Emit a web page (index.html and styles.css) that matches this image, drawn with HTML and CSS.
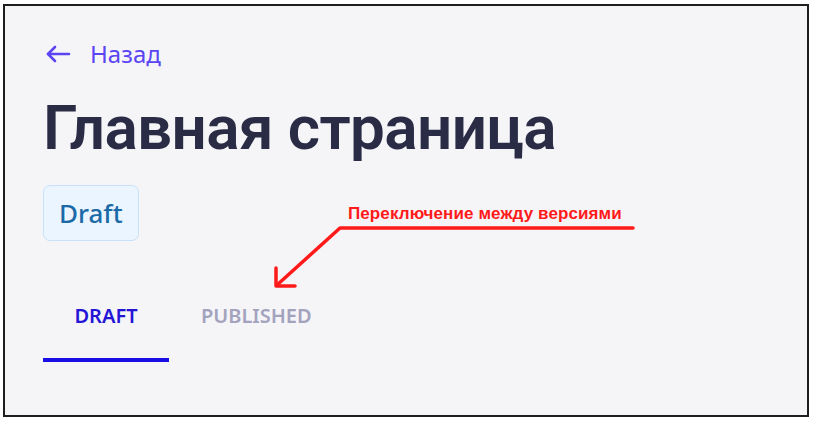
FILE: index.html
```html
<!DOCTYPE html>
<html lang="ru">
<head>
<meta charset="utf-8">
<link rel="stylesheet" href="styles.css">
</head>
<body>
<div class="frame">
  <a class="back" href="#">
    <svg class="back-icon" width="26" height="18" viewBox="0 0 26 18" fill="none" stroke="currentColor" stroke-width="2.6" stroke-linecap="round" stroke-linejoin="round">
      <path d="M24 9H3"/>
      <path d="M10 2L3 9l7 7"/>
    </svg>
    <span>Назад</span>
  </a>
  <h1 class="title">Главная страница</h1>
  <div class="badge-row"><span class="badge">Draft</span></div>
  <div class="tabs">
    <div class="tab tab-active">DRAFT</div>
    <div class="tab">PUBLISHED</div>
  </div>
  <div class="note">
    <span class="note-text">Переключение между версиями</span>
    <svg class="note-arrow" width="370" height="70" viewBox="0 0 370 70" fill="none" stroke="#ff1a1a" stroke-width="3.5" stroke-linecap="round" stroke-linejoin="round">
      <path d="M360 9H67L4 66"/>
      <path d="M3 49V67H22"/>
    </svg>
  </div>
</div>
</body>
</html>
```
FILE: styles.css
```css
html, body {
  margin: 0;
  padding: 0;
  background: #ffffff;
}
body {
  padding: 4px 0 0 3px;
  font-family: "Noto Sans", "Open Sans", sans-serif;
}
.frame {
  position: relative;
  box-sizing: border-box;
  width: 806px;
  height: 413px;
  border: 2px solid #1e1e1e;
  background: #f5f5f8;
  padding: 32px 0 0 38px;
}
.back {
  display: flex;
  align-items: center;
  gap: 19px;
  margin-left: 2px;
  color: #5b45f3;
  text-decoration: none;
  font-size: 24px;
  line-height: 32px;
}
.back-icon {
  display: block;
}
.title {
  margin: 21px 0 0 0;
  font-family: Roboto, "Noto Sans", sans-serif;
  font-size: 62px;
  font-weight: 600;
  line-height: 74px;
  letter-spacing: -0.6px;
  color: #2a2c45;
}
.badge-row {
  display: flex;
  margin-top: 20px;
}
.badge {
  box-sizing: border-box;
  height: 56px;
  padding: 0 15px;
  display: flex;
  align-items: center;
  border: 1.5px solid #c5e1fb;
  border-radius: 7px;
  background: #ebf5ff;
  color: #1b6aa8;
  font-size: 26px;
  font-weight: 500;
}
.tabs {
  display: flex;
  margin-top: 50px;
}
.tab {
  width: 126px;
  box-sizing: border-box;
  text-align: center;
  padding: 12px 0 29px;
  font-size: 20px;
  font-weight: 600;
  line-height: 26px;
  color: #a3a3be;
  border-bottom: 4px solid transparent;
}
.tab-active {
  color: #2414d6;
  border-bottom-color: #1a0ee6;
}
.tab + .tab {
  width: auto;
  padding-left: 32px;
  padding-right: 32px;
}
.note {
  position: absolute;
  left: 268px;
  top: 198px;
  width: 370px;
  height: 90px;
}
.note-text {
  position: absolute;
  left: 75px;
  top: 0;
  font-family: "Liberation Sans", Arial, sans-serif;
  font-weight: 700;
  font-size: 17px;
  letter-spacing: 0.1px;
  line-height: 20px;
  color: #ff1a1a;
  white-space: nowrap;
}
.note-arrow {
  position: absolute;
  left: 0;
  top: 15px;
}
```
